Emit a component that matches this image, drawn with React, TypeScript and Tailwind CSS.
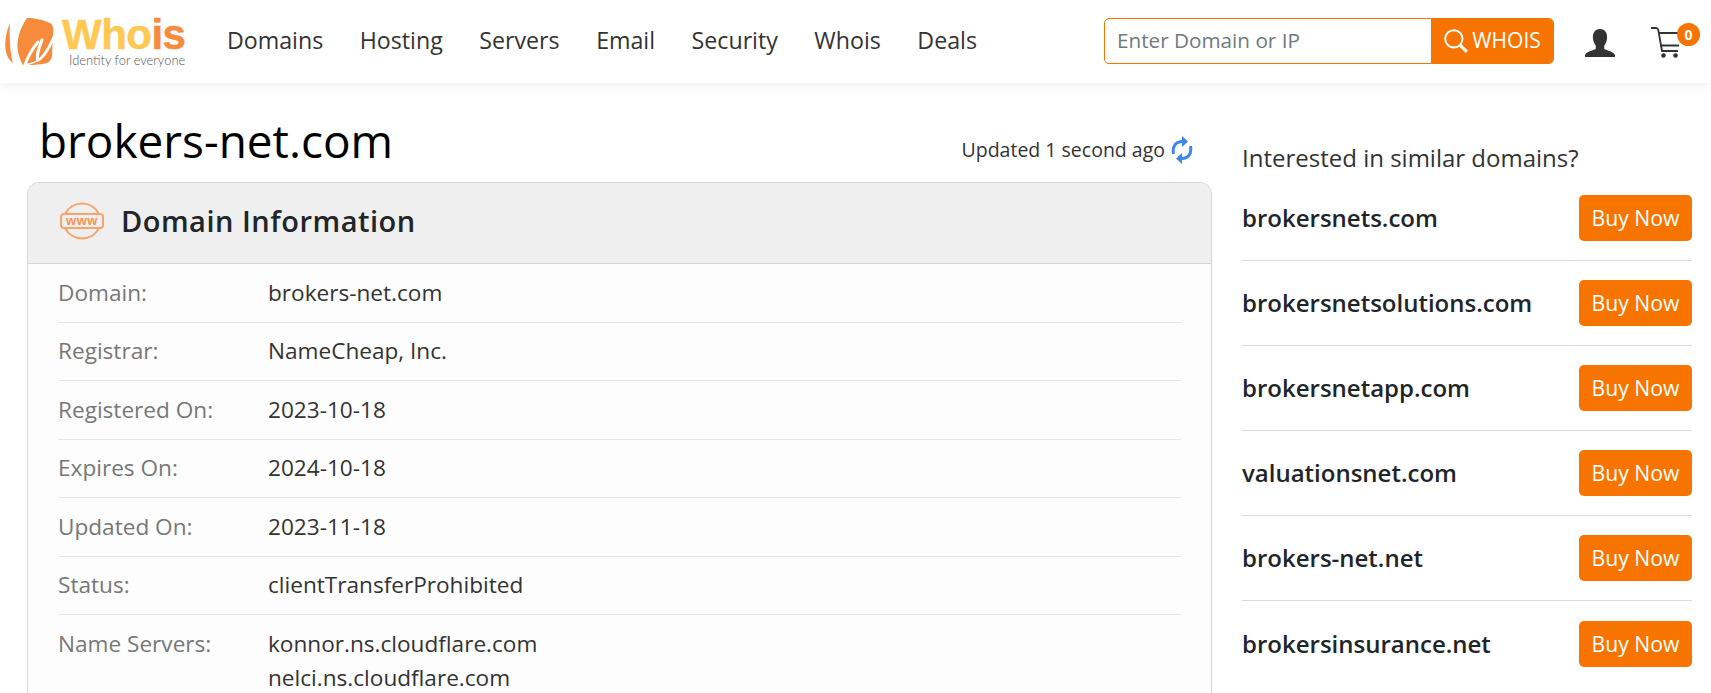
import React from "react";

const navItems = ["Domains", "Hosting", "Servers", "Email", "Security", "Whois", "Deals"];
const rows: [string, string[]][] = [
  ["Domain:", ["brokers-net.com"]],
  ["Registrar:", ["NameCheap, Inc."]],
  ["Registered On:", ["2023-10-18"]],
  ["Expires On:", ["2024-10-18"]],
  ["Updated On:", ["2023-11-18"]],
  ["Status:", ["clientTransferProhibited"]],
  ["Name Servers:", ["konnor.ns.cloudflare.com", "nelci.ns.cloudflare.com"]],
];
const similar = ["brokersnets.com", "brokersnetsolutions.com", "brokersnetapp.com", "valuationsnet.com", "brokers-net.net", "brokersinsurance.net"];

function LogoMark() {
  return (
    <svg width="50" height="50" viewBox="5 17 50 50" className="shrink-0">
      <path d="M10 23 C6 32 4 44 6 52 C7 57 10 61 13 63 C10 52 9 36 10 23 Z" fill="#f68b3c" />
      <path d="M27 18 C34 18 44 20 50 23 C53 25 54 29 53 34 L52 55 C52 60 48 64 42 64 C36 65 29 65 23 65 C19 58 16 48 18 40 C19 32 23 24 27 18 Z" fill="#f68b3c" />
      <path d="M38 42 C33 48 28 56 25 65" fill="none" stroke="#fff" strokeWidth="3" strokeLinecap="round" />
      <path d="M42 40 C39 48 36 55 38 60 C44 58 50 46 55 35" fill="none" stroke="#fff" strokeWidth="3" strokeLinecap="round" />
      <path d="M24 65 C30 64 35 63 38 60" fill="none" stroke="#fff" strokeWidth="1.6" />
    </svg>
  );
}

function WwwIcon() {
  return (
    <svg width="44" height="40" viewBox="0 0 44 40" className="shrink-0">
      <g fill="none" stroke="#f9a46a" strokeWidth="2">
        <path d="M5 13 A19 19 0 0 1 39 13" />
        <path d="M5 27 A19 19 0 0 0 39 27" />
        <rect x="1" y="13" width="42" height="14" rx="3" />
      </g>
      <text x="22" y="24" textAnchor="middle" fontFamily="'Liberation Sans', sans-serif" fontWeight="700" fontSize="13" letterSpacing="0.5" fill="#f9944f">www</text>
    </svg>
  );
}

function UserIcon() {
  return (
    <svg width="30" height="30" viewBox="0 1 32 30">
      <path d="M16 1 C22 1 24 6 23.5 11 C23.2 14.5 22 17 20.5 19 L20.5 22 C23 24 31 25 32 29 L32 31 L0 31 L0 29 C1 25 9 24 11.5 22 L11.5 19 C10 17 8.8 14.5 8.5 11 C8 6 10 1 16 1 Z" fill="#333" />
    </svg>
  );
}

function CartIcon() {
  return (
    <svg width="34" height="34" viewBox="0 0 34 34" fill="none" stroke="#333">
      <path d="M1 2 H6 C7 2 8 3 8.3 4 L12 25 H28" strokeWidth="1.8" />
      <path d="M8.6 7 H31 M10 19.5 H29" strokeWidth="1.8" />
      <circle cx="13.5" cy="29.5" r="2.3" fill="#333" stroke="none" />
      <circle cx="25.5" cy="29.5" r="2.3" fill="#333" stroke="none" />
    </svg>
  );
}

function SearchIcon() {
  return (
    <svg width="26" height="26" viewBox="0 0 24 24" fill="none" stroke="#fff">
      <circle cx="10" cy="10" r="8" strokeWidth="1.8" />
      <path d="M16 16 L22 22" strokeWidth="3" />
    </svg>
  );
}

function RefreshIcon() {
  return (
    <svg width="22" height="28" viewBox="0 0 22 28" className="shrink-0">
      <g fill="none" stroke="#3b86e8" strokeWidth="3">
        <path d="M2.5 18 C1 10 5 5.5 11.5 5.5" />
        <path d="M19.5 10 C21 18 17 22.5 10.5 22.5" />
      </g>
      <path d="M11 0 L17 5.5 L11 11 Z M11 17 L5 22.5 L11 28 Z" fill="#3b86e8" />
    </svg>
  );
}

export default function App() {
  return (
    <div className="h-[693px] overflow-hidden bg-white font-['Open_Sans',sans-serif] text-[#333]">
      <header className="flex h-[83px] items-center bg-white pl-[5px] pr-[27px] shadow-[0_2px_10px_rgba(0,0,0,0.08)]">
        <div className="flex w-[222px] shrink-0 items-center gap-[7px]">
          <LogoMark />
          <div className="flex flex-col font-['Liberation_Sans',sans-serif]">
            <span className="mt-[2px] text-[42px] font-bold leading-[34px] tracking-[-0.5px] text-[#ffc853] [-webkit-text-stroke:0.5px_#ffc853]">
              Who<span className="text-[#f68b3c] [-webkit-text-stroke:0.5px_#f68b3c]">is</span>
            </span>
            <span className="mt-[1px] pl-[7px] font-['Lato',sans-serif] text-[12.9px] font-light leading-[14px] text-[#555]">Identity for everyone</span>
          </div>
        </div>
        <nav className="-mt-[4px] flex items-center gap-[36.5px] text-[23.2px] leading-[30px] text-[#333]">
          {navItems.map((n) => (
            <span key={n}>{n}</span>
          ))}
        </nav>
        <div className="-mt-[2px] ml-auto flex items-center">
          <div className="flex h-[46px] w-[450px] overflow-hidden rounded-[5px] border border-[#f77400]">
            <div className="flex flex-1 items-center pl-[12px] text-[20.7px] text-[#727980]">Enter Domain or IP</div>
            <div className="flex w-[122px] items-center justify-center gap-[3px] bg-[#f77400] text-[21px] text-white">
              <SearchIcon />
              <span>WHOIS</span>
            </div>
          </div>
          <div className="ml-[31px] mt-[4px]">
            <UserIcon />
          </div>
          <div className="relative ml-[35px] mt-[4px]">
            <CartIcon />
            <span className="absolute -right-[16px] -top-[3px] flex h-[23px] w-[23px] items-center justify-center rounded-full bg-[#f77400] text-[14px] font-bold text-white">0</span>
          </div>
        </div>
      </header>

      <main className="flex pl-[27px] pr-[19px]">
        <section className="w-[1185px] shrink-0">
          <div className="flex h-[99px] items-start justify-between pl-[12px] pr-[19px]">
            <h1 className="mt-[27px] text-[45.9px] font-normal leading-[61px] text-black">brokers-net.com</h1>
            <div className="mt-[53px] flex items-center gap-[6px] text-[19.5px] leading-[28px] text-[#333]">
              <span>Updated 1 second ago</span>
              <RefreshIcon />
            </div>
          </div>
          <div className="rounded-t-[12px] border border-[#d4d4d4] bg-[#fdfdfd]">
            <div className="flex h-[81px] items-center gap-[17px] rounded-t-[12px] border-b border-[#d4d4d4] bg-[#efefef] pb-[5px] pl-[32px]">
              <WwwIcon />
              <h2 className="text-[29px] font-semibold leading-[40px] tracking-[0.5px] text-[#212529]">Domain Information</h2>
            </div>
            <div className="px-[30px]">
              {rows.map(([label, values], i) => (
                <div key={label} className={`flex text-[22.6px] leading-[34px] ${i < rows.length - 1 ? "h-[58.55px] border-b border-[#e6e6e6]" : ""} pt-[11.5px]`}>
                  <div className="w-[210px] shrink-0 text-[#777]">{label}</div>
                  <div className="text-[#333]">
                    {values.map((v) => (
                      <div key={v}>{v}</div>
                    ))}
                  </div>
                </div>
              ))}
            </div>
          </div>
        </section>
        <aside className="ml-[30px] flex-1">
          <h3 className="mt-[58px] text-[24px] font-normal leading-[34px] text-[#333]">Interested in similar domains?</h3>
          <div className="mt-[1px]">
            {similar.map((d, i) => (
              <div key={d} className={`flex h-[85px] items-center justify-between ${i < similar.length - 1 ? "border-b border-[#d9d9d9]" : ""}`}>
                <span className="text-[24px] font-semibold leading-[32px] text-[#212529]">{d}</span>
                <span className="flex h-[46px] w-[113px] items-center justify-center rounded-[5px] bg-[#f77400] text-[21.2px] text-white">Buy Now</span>
              </div>
            ))}
          </div>
        </aside>
      </main>
    </div>
  );
}
